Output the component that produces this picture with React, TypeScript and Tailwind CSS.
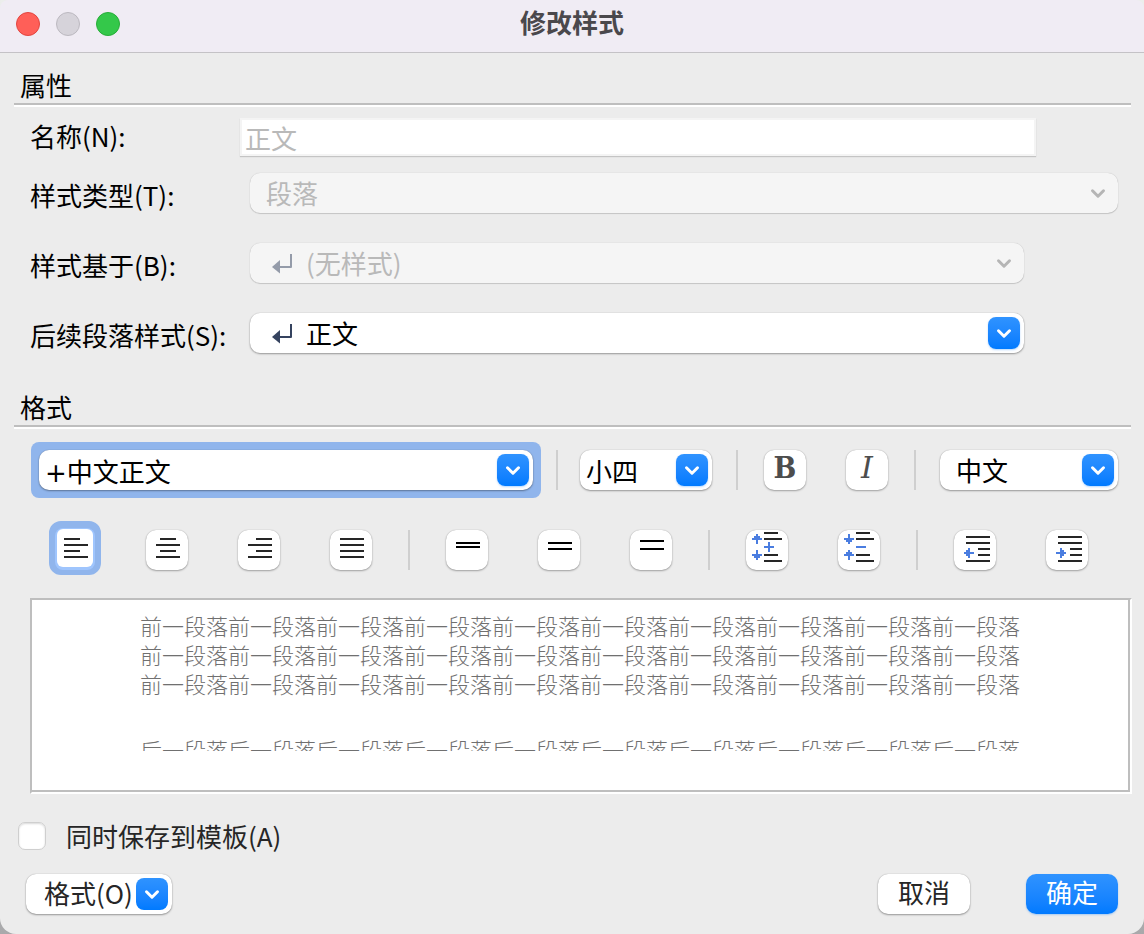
import type { ReactNode } from "react";

const BLUE = "#4a7de0";

function Chevron({ className }: { className: string }) {
  return (
    <svg viewBox="0 0 32 32" className={className} fill="none" stroke="currentColor" strokeWidth="3" strokeLinecap="round" strokeLinejoin="round" aria-hidden="true">
      <path d="M10.5 13.8 L16 19.2 L21.5 13.8" />
    </svg>
  );
}

function ReturnIcon({ className }: { className: string }) {
  return (
    <svg viewBox="0 0 24 24" className={className} aria-hidden="true">
      <path d="M0 16 L8 9 V22.5 Z" fill="#35435f" />
      <path d="M7 16 H19 V3" fill="none" stroke="#35435f" strokeWidth="2" strokeLinejoin="round" />
    </svg>
  );
}

type PickerProps = {
  id: string;
  label?: string;
  value: string;
  disabled?: boolean;
  icon?: boolean;
  pad: string;
  className: string;
};

function Picker({ id, label, value, disabled, icon, pad, className }: PickerProps) {
  const tone = disabled
    ? "bg-[#f5f5f5] text-[#b9b9b9] shadow-[0_0_1px_rgba(0,0,0,0.25),0_1px_1px_rgba(0,0,0,0.15)]"
    : "bg-white text-black shadow-[0_0_1px_rgba(0,0,0,0.3),0_1px_2px_rgba(0,0,0,0.35)]";
  return (
    <div className={`relative h-10 ${className}`}>
      <select id={id} aria-label={label} disabled={disabled} className={`block h-10 w-full appearance-none rounded-[10px] pr-10 opacity-100 outline-none ${pad} ${tone}`}>
        <option>{value}</option>
      </select>
      {icon && <ReturnIcon className={`pointer-events-none absolute left-[22px] top-2 size-6 ${disabled ? "opacity-50" : ""}`} />}
      <Chevron
        className={`pointer-events-none absolute right-1 top-1 size-8 rounded-lg ${disabled ? "text-[#b5b5b5]" : "bg-linear-to-b from-[#2f93ff] to-[#007aff] text-white shadow-[0_1px_2px_rgba(0,122,255,0.3)]"}`}
      />
    </div>
  );
}

function Heading({ children }: { children: ReactNode }) {
  return <h2 className="border-b-2 border-[#bebebe] pl-1.5 leading-9 shadow-[0_2px_0_#fff]">{children}</h2>;
}

function Separator() {
  return <div className="h-10 w-0.5 shrink-0 bg-[#cfcfcf]" />;
}

function ToolButton({ label, active, children }: { label: string; active?: boolean; children: ReactNode }) {
  if (active) {
    return (
      <div className="flex h-9 w-[42px] shrink-0 items-center justify-center self-start">
        <button type="button" aria-label={label} aria-pressed="true" className="h-[54px] w-[52px] shrink-0 rounded-xl border-8 border-[#90b5ec] bg-[#90b5ec]">
          <span className="flex h-[38px] w-9 items-center justify-center rounded-md bg-white pt-1 shadow-[0_1px_0_2px_#9fc5fd]">{children}</span>
        </button>
      </div>
    );
  }
  return (
    <button type="button" aria-label={label} className="flex h-10 w-[42px] shrink-0 items-center justify-center rounded-[10px] bg-white shadow-[0_0_1px_rgba(0,0,0,0.3),0_1px_2px_rgba(0,0,0,0.3)]">
      {children}
    </button>
  );
}

type Line = [x: number, y: number, width: number];

function Lines({ lines, color = "#262626", children }: { lines: Line[]; color?: string; children?: ReactNode }) {
  return (
    <svg viewBox="0 0 42 40" className="h-10 w-[42px] shrink-0" shapeRendering="crispEdges" aria-hidden="true">
      {lines.map(([x, y, width]) => (
        <rect key={y} x={x} y={y} width={width} height="2" fill={color} />
      ))}
      {children}
    </svg>
  );
}

function Arrow({ x, y, turn }: { x: number; y: number; turn: number }) {
  return (
    <path
      d="M-1 -5 H1 V-3 H3 V-1 H5 V1 H1 V5 H-1 V1 H-5 V-1 H-3 V-3 H-1 Z"
      transform={`translate(${x} ${y}) rotate(${turn})`}
      fill={BLUE}
    />
  );
}

const spacingLines: Line[] = [[18, 2, 14], [18, 8, 18], [18, 24, 14], [18, 30, 18]];
const indentLines: Line[] = [[12, 6, 24], [12, 12, 24], [24, 18, 12], [24, 24, 12], [12, 30, 24]];

export default function App() {
  return (
    <div className="min-h-screen bg-linear-to-b from-[#eceeec] to-[#a9a9ab] font-['Noto_Sans_CJK_SC',sans-serif] text-[26px] text-black">
      <main className="flex min-h-screen flex-col overflow-hidden rounded-b-2xl rounded-t-lg bg-[#ececec]">
        <header className="grid h-[53px] grid-cols-[1fr_auto_1fr] items-center border-b border-[#c4c2c6] bg-[#f0ecf4] px-4 pb-1">
          <div className="flex gap-4">
            <button type="button" aria-label="关闭" className="size-6 rounded-full border border-[#e2453f] bg-[#ff5f58]" />
            <button type="button" aria-label="最小化" disabled className="size-6 rounded-full border border-[#bcb9c0] bg-[#d6d3da]" />
            <button type="button" aria-label="缩放" className="size-6 rounded-full border border-[#27ad38] bg-[#34c84a]" />
          </div>
          <h1 className="pb-1 font-bold leading-10 text-[#4a484c]">修改样式</h1>
        </header>

        <section className="mt-[14px] pl-[14px] pr-[13px]">
          <Heading>属性</Heading>
          <div className="mt-[13px] flex items-center pl-4 pr-[95px]">
            <label htmlFor="name" className="w-[210px] shrink-0 pb-0.5 leading-9">名称(N):</label>
            <input id="name" disabled defaultValue="正文" className="h-[38px] min-w-0 flex-1 border-2 border-[#f4f4f4] bg-white pl-[3px] text-[#b9b9b9] shadow-[0_1px_1px_#c4c4c4]" />
          </div>
          <div className="mt-[17px] flex flex-col gap-[30px] pl-4">
            <div className="flex items-center">
              <label htmlFor="kind" className="w-[220px] shrink-0 pt-1 leading-9">样式类型(T):</label>
              <Picker id="kind" value="段落" disabled pad="pl-4 pb-0.5" className="mr-[13px] flex-1" />
            </div>
            <div className="flex items-center">
              <label htmlFor="base" className="w-[220px] shrink-0 pt-1 leading-9">样式基于(B):</label>
              <Picker id="base" value="(无样式)" disabled icon pad="pl-14 pb-0.5" className="mr-[107px] flex-1" />
            </div>
            <div className="flex items-center">
              <label htmlFor="next" className="w-[220px] shrink-0 pt-1 leading-9">后续段落样式(S):</label>
              <Picker id="next" value="正文" icon pad="pl-14 pb-0.5" className="mr-[107px] flex-1" />
            </div>
          </div>
        </section>

        <section className="mt-9 pl-[14px] pr-[13px]">
          <Heading>格式</Heading>
          <div className="mt-[15px] flex items-center pl-[17px] pr-[13px]">
            <div className="flex-1 rounded-lg bg-[#90b5ec] p-2">
              <Picker id="font" label="字体" value="+中文正文" pad="pl-1.5 pt-1 font-['DejaVu_Sans','Noto_Sans_CJK_SC',sans-serif]" className="w-full" />
            </div>
            <div className="ml-[15px] flex items-center">
              <Separator />
              <Picker id="size" label="字号" value="小四" pad="pl-1.5" className="ml-[22px] mr-6 w-[132px]" />
              <Separator />
              <div className="mx-[26px] flex gap-10">
                <ToolButton label="加粗">
                  <span className="pb-1 font-['DejaVu_Serif_Condensed','DejaVu_Serif',serif] text-[30px] font-bold leading-9 text-[#4d4d4d]">B</span>
                </ToolButton>
                <ToolButton label="倾斜">
                  <span className="pb-1 font-['DejaVu_Serif',serif] text-[30px] italic leading-9 text-[#4d4d4d]">I</span>
                </ToolButton>
              </div>
              <Separator />
              <Picker id="script" label="文字" value="中文" pad="pl-4 pb-1" className="ml-6 w-[178px]" />
            </div>
          </div>

          <div className="mt-8 flex items-center justify-between pl-10 pr-[43px]">
            <ToolButton label="左对齐" active>
              <Lines lines={[[10, 8, 16], [10, 14, 24], [10, 20, 16], [10, 26, 24]]} />
            </ToolButton>
            <ToolButton label="居中">
              <Lines lines={[[14, 8, 16], [10, 14, 24], [14, 20, 16], [10, 26, 24]]} />
            </ToolButton>
            <ToolButton label="右对齐">
              <Lines lines={[[18, 8, 16], [10, 14, 24], [18, 20, 16], [10, 26, 24]]} />
            </ToolButton>
            <div className="flex items-center gap-9">
              <ToolButton label="两端对齐">
                <Lines lines={[[10, 8, 24], [10, 14, 24], [10, 20, 24], [10, 26, 24]]} />
              </ToolButton>
              <Separator />
              <ToolButton label="单倍行距">
                <Lines color="#000" lines={[[10, 12, 24], [10, 16, 24]]} />
              </ToolButton>
            </div>
            <ToolButton label="1.5 倍行距">
              <Lines color="#000" lines={[[10, 12, 24], [10, 18, 24]]} />
            </ToolButton>
            <div className="flex items-center gap-9">
              <ToolButton label="双倍行距">
                <Lines color="#000" lines={[[10, 10, 24], [10, 18, 24]]} />
              </ToolButton>
              <Separator />
              <ToolButton label="增加段落间距">
                <Lines lines={spacingLines}>
                  <Arrow x={11} y={9} turn={0} />
                  <path d="M22 12 H24 V16 H28 V18 H24 V22 H22 V18 H18 V16 H22 Z" fill={BLUE} />
                  <Arrow x={11} y={25} turn={180} />
                </Lines>
              </ToolButton>
            </div>
            <div className="flex items-center gap-9">
              <ToolButton label="减少段落间距">
                <Lines lines={spacingLines}>
                  <Arrow x={11} y={9} turn={180} />
                  <path d="M18 16 H28 V18 H18 Z" fill={BLUE} />
                  <Arrow x={11} y={25} turn={0} />
                </Lines>
              </ToolButton>
              <Separator />
              <ToolButton label="减少缩进">
                <Lines lines={indentLines}>
                  <Arrow x={15} y={23} turn={-90} />
                </Lines>
              </ToolButton>
            </div>
            <ToolButton label="增加缩进">
              <Lines lines={indentLines}>
                <Arrow x={15} y={23} turn={90} />
              </Lines>
            </ToolButton>
          </div>
        </section>

        <section className="ml-[30px] mr-3 mt-7 border-2 border-b-white border-l-[#bebebe] border-r-white border-t-[#bebebe]">
          <div className="h-48 overflow-hidden border-b-2 border-r-2 border-[#bebebe] bg-white pt-[11px] text-[22px] font-light leading-[29px] text-[#707070]">
            <p className="mx-auto h-[87px] w-[880px] break-all">{"前一段落".repeat(30)}</p>
            <p className="mx-auto mt-[37px] h-4 w-[880px] overflow-hidden break-all">{"后一段落".repeat(10)}</p>
          </div>
        </section>

        <div className="mt-6 flex items-center pl-[18px] text-[#262626]">
          <input id="template" type="checkbox" className="size-7 appearance-none rounded-[7px] border border-[#cfcfcf] bg-white shadow-[inset_0_1px_2px_rgba(0,0,0,0.15)] checked:bg-[#007aff]" />
          <label htmlFor="template" className="pl-5 leading-9">同时保存到模板(A)</label>
        </div>

        <footer className="mt-5 flex items-center pb-5 pl-[26px] pr-[26px] text-[#262626]">
          <button type="button" aria-haspopup="menu" className="flex h-10 items-center justify-between rounded-[10px] bg-white pl-[18px] pr-1 shadow-[0_0_1px_rgba(0,0,0,0.3),0_1px_2px_rgba(0,0,0,0.35)]">
            <span className="pb-0.5 leading-9">格式(O)</span>
            <Chevron className="ml-[3px] size-8 rounded-lg bg-linear-to-b from-[#2f93ff] to-[#007aff] text-white" />
          </button>
          <button type="button" className="ml-auto h-10 w-[92px] rounded-[10px] bg-white pb-1 leading-9 shadow-[0_0_1px_rgba(0,0,0,0.3),0_1px_2px_rgba(0,0,0,0.35)]">取消</button>
          <button type="button" className="ml-14 h-10 w-[92px] rounded-[10px] bg-linear-to-b from-[#2f93ff] to-[#007aff] pb-1 leading-9 text-white shadow-[0_1px_2px_rgba(0,122,255,0.3)]">确定</button>
        </footer>
      </main>
    </div>
  );
}
